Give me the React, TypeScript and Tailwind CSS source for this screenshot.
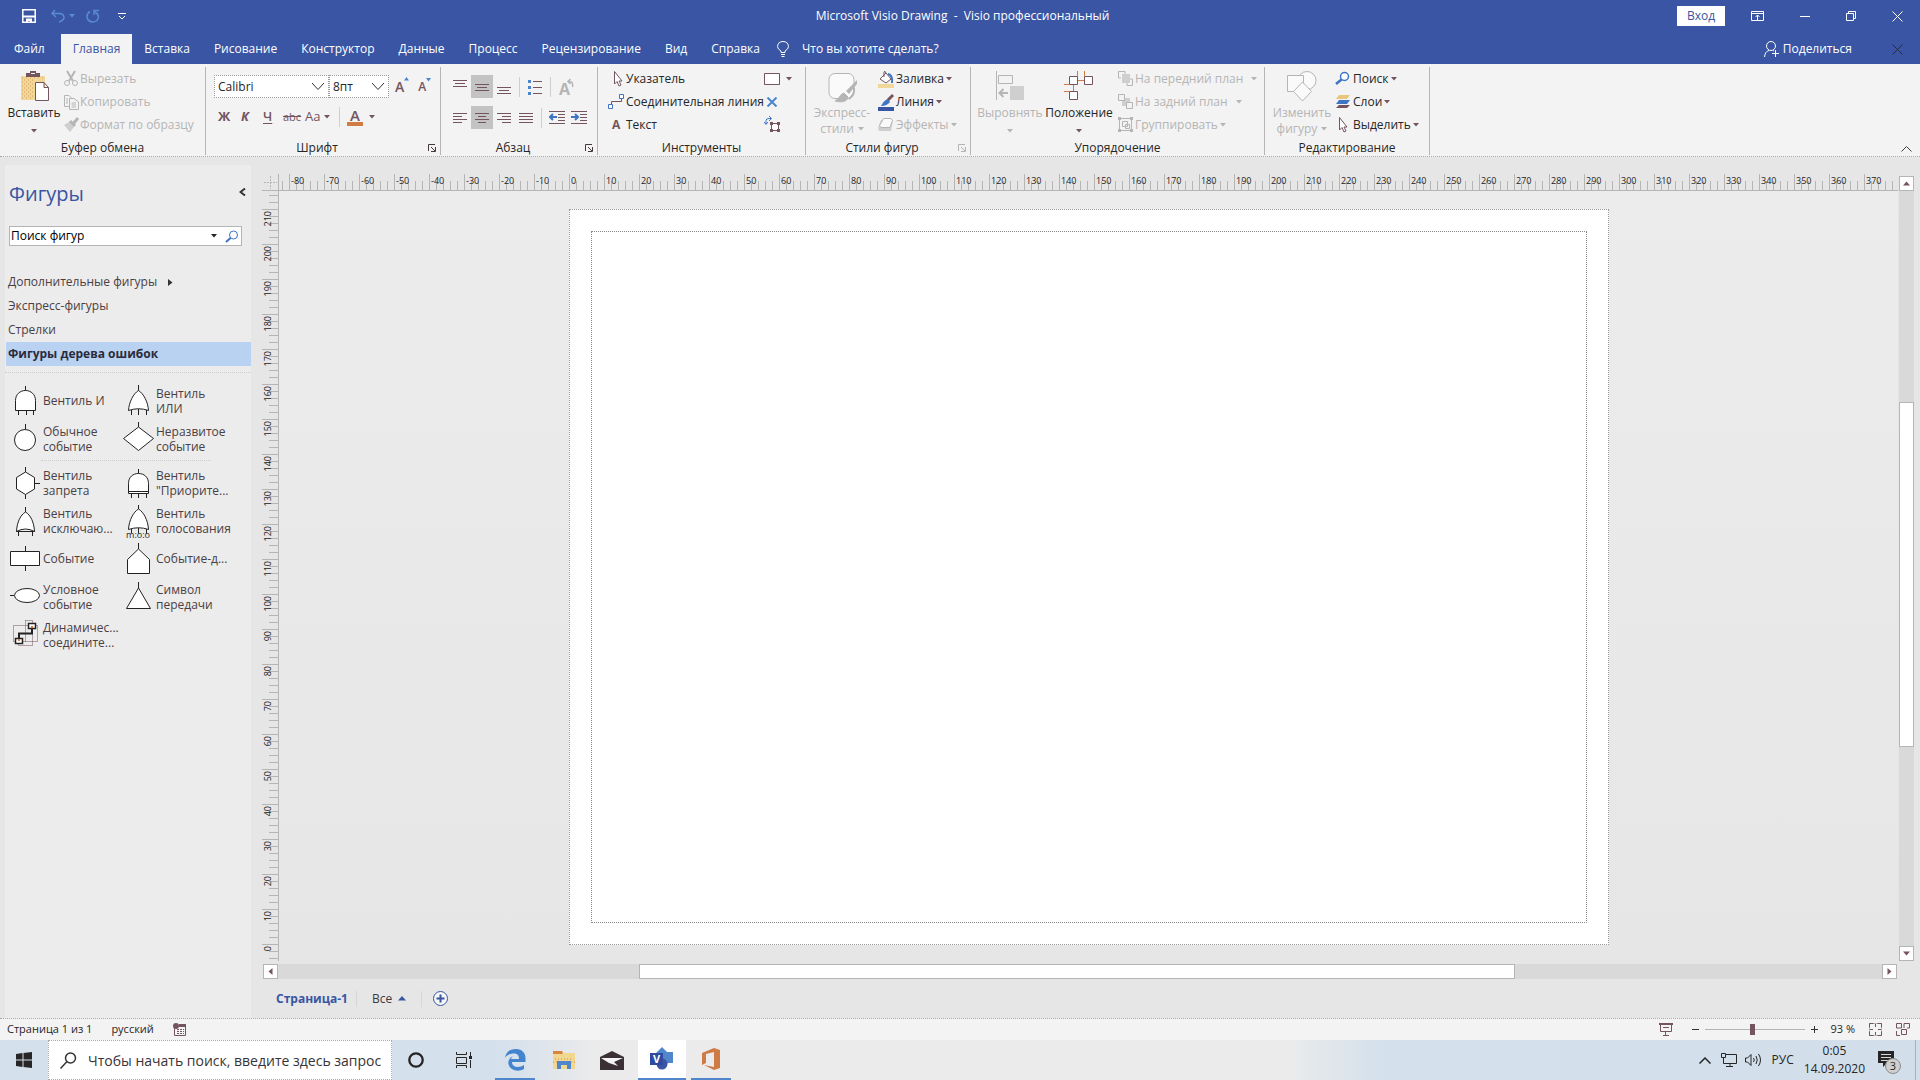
import { useState } from 'react'
import type { ReactNode } from 'react'
import clsx from 'clsx'

const TABS = ['Файл', 'Главная', 'Вставка', 'Рисование', 'Конструктор', 'Данные', 'Процесс', 'Рецензирование', 'Вид', 'Справка']
const STENCILS = ['Дополнительные фигуры', 'Экспресс-фигуры', 'Стрелки', 'Фигуры дерева ошибок']

const H_MARKS = Array.from({ length: 46 }, (_, i) => (i - 8) * 10)
const V_MARKS = Array.from({ length: 22 }, (_, i) => 210 - i * 10)

function Caret({ className = 'text-[#74555f]' }: { className?: string }) {
  return (
    <svg width="6" height="4" viewBox="0 0 6 4" className={clsx('shrink-0', className)} fill="currentColor">
      <path d="M0 0H6L3 3.5Z" />
    </svg>
  )
}

/* ---------- shape previews ---------- */

const andBody = 'M6.5 28.5V18.5C6.5 12.5 11 8.5 16.5 8.5S26.5 12.5 26.5 18.5V28.5Z'
const orBody = 'M16.5 8.5C11.5 11.5 7 20 6.5 28.5Q16.5 25 26.5 28.5C26 20 21.5 11.5 16.5 8.5Z'

const SHAPES_TOP: [string, ReactNode][] = [
  ['Вентиль И', <path d={`M16.5 4V8.5${andBody}M9.5 28.5V33M17.5 28.5V33M24.5 28.5V33`} />],
  ['Вентиль\nИЛИ', <path d={`M16.5 3V8.5${orBody}M9.5 28V33M16.5 27V33M24.5 28V33`} />],
  ['Обычное\nсобытие', <><path d="M16.5 4V9" /><circle cx="16" cy="20" r="10.5" /></>],
  ['Неразвитое\nсобытие', <path d="M16.5 2V7L31.5 18.5L16.5 30.5L1.5 18.5L16.5 7" />],
]

const SHAPES_BOTTOM: [string, ReactNode][] = [
  ['Вентиль\nзапрета', <path d="M16.5 3V8L25.5 13.5V25L16.5 30.5L7.5 25V13.5L16.5 8M16.5 30.5V35M25.5 19.5H31" />],
  ['Вентиль\n"Приорите...', <path d="M16.5 5V9.5M6.5 29.5V19.5C6.5 13 11 9.5 16.5 9.5S26.5 13 26.5 19.5V29.5ZM6.5 27.5H26.5M9.5 29.5V34M16.5 29.5V34M24.5 29.5V34" />],
  ['Вентиль\nисключаю...', <path d="M16.5 5V10C11.5 13 8 20 7.5 29.5H25.5C25 20 21.5 13 16.5 10M7.5 29.5Q16.5 24.5 25.5 29.5M9.5 29.5V34M23.5 29.5V34" />],
  ['Вентиль\nголосования', (
    <>
      <path d="M16.5 3V7C11.5 10 7 18 6.5 27.5Q16.5 24 26.5 27.5C26 18 21.5 10 16.5 7M9.5 27V31M16.5 26V31M24.5 27V31" />
      <text x="16" y="36" textAnchor="middle" fontSize="9" fill="#222" stroke="none">m:o:o</text>
    </>
  )],
  ['Событие', <path d="M16.5 6V11.5M1.5 11.5H30.5V25.5H1.5ZM16.5 25.5V31" />],
  ['Событие-д...', <path d="M16.5 3V9L27.5 19.5V33.5H5.5V19.5L16.5 9" />],
  ['Условное\nсобытие', <><path d="M1 17.5H5" /><ellipse cx="18" cy="17.5" rx="12.5" ry="7" /></>],
  ['Символ\nпередачи', <path d="M16.5 4V10L28.5 30.5H4.5L16.5 10" />],
  ['Динамичес...\nсоедините...', (
    <>
      <path d="M4.5 9.5H28.5V25.5H4.5ZM16.5 4.5H23.5V29.5H9.5V25.5M16.5 4.5V25.5" fill="none" stroke="#74555f" strokeDasharray="1 1" />
      <path d="M10 22V17.5H23V13" fill="none" strokeWidth="2" />
      <path d="M19.5 7.5H26.5V12.5H19.5ZM6.5 22.5H13.5V27.5H6.5Z" strokeWidth="1.5" />
      <path d="M22 10H24V12H22ZM9 23H11V25H9Z" fill="#d07c42" stroke="none" />
    </>
  )],
]

function ShapeGrid({ items }: { items: [string, ReactNode][] }) {
  return (
    <div className="grid grid-cols-[113px_1fr] pl-1">
      {items.map(([name, drawing]) => (
        <button key={name} className="flex h-[38px] items-center gap-px text-left">
          <svg width="33" height="38" viewBox="0 0 33 38" className="shrink-0" fill="#fff" stroke="#222">
            {drawing}
          </svg>
          <span className="pb-px text-[12px] leading-[15px] whitespace-pre text-[#4a4044]">{name}</span>
        </button>
      ))}
    </div>
  )
}

/* ---------- ribbon ---------- */

function Group({ title, className, launcher, faded, children }: {
  title: string
  className: string
  launcher?: boolean
  faded?: boolean
  children: ReactNode
}) {
  return (
    <section className={clsx('mt-[3px] flex h-[88px] shrink-0 flex-col border-r border-[#b5b5b5]', className)}>
      <div className="flex h-[73px]">{children}</div>
      <div className="flex h-[15px] items-center leading-[15px]">
        <span className="flex-1 text-center whitespace-nowrap">{title}</span>
        {launcher && (
          <button aria-label={`Параметры: ${title}`} className={clsx('mr-1', faded ? 'text-[#b5b5b5]' : 'text-[#44383c]')}>
            <svg width="8" height="8" viewBox="0 0 8 8" fill="none" stroke="currentColor">
              <path d="M.5 7V.5H7M3 3L7 7M7.5 3V7.5H3" />
            </svg>
          </button>
        )}
      </div>
    </section>
  )
}

function Row({ icon, label, off, caret, wide }: { icon: ReactNode; label: string; off?: boolean; caret?: boolean; wide?: boolean }) {
  return (
    <button className={clsx('flex h-[23px] items-center whitespace-nowrap', off ? 'text-[#b5b5b5]' : 'text-[#262626]')}>
      <svg width="18" height="18" viewBox="0 0 18 18" fill="none" stroke="currentColor" className="shrink-0">
        {icon}
      </svg>
      <span>{label}</span>
      {caret && <Caret className={clsx(wide ? 'ml-2' : 'ml-0.5', off ? 'text-[#b5b5b5]' : 'text-[#74555f]')} />}
    </button>
  )
}

function Lines({ d, on, label }: { d: string; on?: boolean; label: string }) {
  return (
    <button aria-label={label} className={clsx('flex h-[23px] w-[22px] items-center justify-center', on && 'bg-[#c3c3c3]')}>
      <svg width="14" height="16" viewBox="0 0 14 16" fill="none" stroke="#74555f">
        <path d={d} />
      </svg>
    </button>
  )
}

function Combo({ label, value, className }: { label: string; value: string; className: string }) {
  return (
    <div className="relative flex">
      <select aria-label={label} className={clsx('h-[23px] appearance-none border border-dotted border-[#999] bg-white pl-[3px] text-[12px]', className)}>
        <option>{value}</option>
      </select>
      <svg width="14" height="9" viewBox="0 0 14 9" className="pointer-events-none absolute top-[7px] right-1" fill="none" stroke="#333">
        <path d="M1 1L7 7.500L13 1" />
      </svg>
    </div>
  )
}

const pointer = <path d="M6.5 1.5V14L9 11.5L11 16L13 15L11 11H14Z" fill="#fff" stroke="#74555f" />

function Ribbon() {
  return (
    <div className="flex h-[93px] border-b border-dotted border-[#a8a8a8] bg-[#f3f3f3] text-[12px] text-[#262626]">
      <Group title="Буфер обмена" className="w-[206px]">
        <button className="flex w-[62px] flex-col items-center pl-[6px]">
          <svg width="32" height="34" viewBox="0 0 32 34" fill="none" className="mt-1">
            <path d="M3 5H27V29H3Z" fill="#f0d797" />
            <path d="M4 7H26M4 11H16M4 15H16M4 19H16M4 23H16M4 27H16" stroke="#dca05f" strokeDasharray="1 3" />
            <path d="M6 9H17M6 13H17M6 17H17M6 21H17M6 25H17" stroke="#dca05f" strokeDasharray="1 3" />
            <path d="M8 6V2H12V0H18V2H22V6Z" fill="#74555f" />
            <path d="M13 2H17V3H13Z" fill="#f3f3f3" />
            <path d="M17.5 11.5H26L30.5 16.5V29.5H17.5ZM26 11.5V16.5H30.5" fill="#fff" stroke="#74555f" />
          </svg>
          <span className="leading-4">Вставить</span>
          <Caret className="mt-2 text-[#74555f]" />
        </button>
        <div className="flex flex-col">
          <Row off label="Вырезать" icon={<><path d="M5 1L11 11M13 1L7 11" strokeWidth="2" /><circle cx="5" cy="13" r="2.5" /><circle cx="13" cy="13" r="2.5" /></>} />
          <Row off label="Копировать" icon={<path d="M7 13.5H2.5V2.5H7L9.500 5V6M7.500 5.500H12L16.500 9V16.500H7.500ZM4 6H6M4 8H6M4 10H6M9.500 10H14M9.500 12H14M9.500 14H14" />} />
          <Row off label="Формат по образцу" icon={<><path d="M2 9L7 6L12 11L8 16Z" fill="#cfcfcf" stroke="none" /><path d="M8 5L13 10M11 8L16 2" strokeWidth="3" /></>} />
        </div>
      </Group>

      <Group title="Шрифт" className="w-[235px]" launcher>
        <div className="flex flex-col gap-2 pt-2 pl-2">
          <div className="flex items-center">
            <Combo label="Шрифт" value="Calibri" className="w-[115px]" />
            <Combo label="Размер" value="8пт" className="w-[60px]" />
            <button className="ml-[6px] flex text-[14px] leading-5 font-semibold text-[#74555f]">
              A<span className="-mt-1"><svg width="5" height="12" viewBox="0 0 5 12"><path d="M0 7.500L2.500 4L5 7.500Z" fill="#4a86cf" /></svg></span>
            </button>
            <button className="ml-[9px] flex text-[12px] leading-5 font-semibold text-[#74555f]">
              A<span className="-mt-1"><svg width="5" height="12" viewBox="0 0 5 12"><path d="M0 5L2.500 8.500L5 5Z" fill="#4a86cf" /></svg></span>
            </button>
          </div>
          <div className="flex h-[22px] items-center pl-1 text-[13px] text-[#74555f]">
            <button className="w-[23px] text-left font-bold">Ж</button>
            <button className="w-[22px] text-left font-bold italic">К</button>
            <button className="w-5 text-left font-semibold underline underline-offset-2">Ч</button>
            <button className="w-[22px] text-left text-[11px] line-through">abc</button>
            <button className="flex w-[34px] items-center gap-1">Aa<Caret /></button>
            <span className="h-5 w-px bg-[#cfcfcf]" />
            <button aria-label="Цвет текста" className="ml-[7px] flex items-center gap-[6px]">
              <span className="flex w-4 justify-center border-b-4 border-[#d07c42] text-[15px] leading-[14px] font-semibold">A</span>
              <Caret />
            </button>
          </div>
        </div>
      </Group>

      <Group title="Абзац" className="w-[157px]" launcher>
        <div className="flex flex-col gap-2 pt-2 pl-2">
          <div className="flex items-center">
            <Lines label="По верхнему краю" d="M0 1.500H14M2 4.500H12M0 7.500H14" />
            <Lines label="По середине" on d="M0 5.500H14M2 8.500H12M0 11.500H14" />
            <Lines label="По нижнему краю" d="M0 8.500H14M2 11.500H12M0 14.500H14" />
            <span className="mx-1 h-5 w-px bg-[#cfcfcf]" />
            <button aria-label="Маркеры" className="flex w-[22px] justify-center">
              <svg width="14" height="16" viewBox="0 0 14 16" stroke="#74555f">
                <path d="M5 2.500H14M5 8.500H14M5 14.500H14" />
                <path d="M0 2.500H3M0 8.500H3M0 14.500H3" stroke="#4a86cf" strokeWidth="3" />
              </svg>
            </button>
            <span className="mx-1 h-5 w-px bg-[#cfcfcf]" />
            <button aria-label="Повернуть текст" className="ml-1">
              <svg width="16" height="18" viewBox="0 0 16 18" fill="none" stroke="#b5b5b5">
                <text x="0" y="17" fontSize="16" fontWeight="bold" fill="#b5b5b5" stroke="none">A</text>
                <path d="M9 3.500H11Q14.500 4 13.500 9M11.500 1L9 3.500L11.500 6" strokeWidth="1.500" />
              </svg>
            </button>
          </div>
          <div className="flex items-center">
            <Lines label="По левому краю" d="M0 3.500H14M0 6.500H9M0 9.500H14M0 12.500H9" />
            <Lines label="По центру" on d="M0 3.500H14M3 6.500H11M0 9.500H14M3 12.500H11" />
            <Lines label="По правому краю" d="M0 3.500H14M5 6.500H14M0 9.500H14M5 12.500H14" />
            <Lines label="По ширине" d="M0 3.500H14M0 6.500H14M0 9.500H14M0 12.500H14" />
            <span className="mx-1 h-5 w-px bg-[#cfcfcf]" />
            {['M8 7H1M4 4L1 7L4 10', 'M0 7H7M4 4L7 7L4 10'].map((d, i) => (
              <button key={d} aria-label={i ? 'Увеличить отступ' : 'Уменьшить отступ'} className="flex w-[22px] justify-center">
                <svg width="16" height="15" viewBox="0 0 16 15" fill="none" stroke="#74555f">
                  <path d="M0 1.500H16M9 4.500H16M9 7.500H16M9 10.500H16M0 13.500H16" />
                  <path d={d} stroke="#3d74c4" strokeWidth="2" />
                </svg>
              </button>
            ))}
          </div>
        </div>
      </Group>

      <Group title="Инструменты" className="w-[208px]">
        <div className="flex flex-1 flex-col pl-[10px]">
          <Row label="Указатель" icon={pointer} />
          <Row label="Соединительная линия" icon={<><path d="M3.500 12V8.500H13.500V6" stroke="#74555f" /><path d="M.5 11.500H4.500V15.500H.5ZM11.500 1.500H15.500V5.500H11.500Z" fill="#fff" stroke="#3d74c4" /></>} />
          <Row label="Текст" icon={<text x="4" y="13" fontSize="12" fontWeight="bold" fill="#74555f" stroke="none">A</text>} />
        </div>
        <div className="flex w-[41px] flex-col">
          <button aria-label="Прямоугольник" className="flex h-[23px] items-center gap-[6px]">
            <svg width="16" height="12" viewBox="0 0 16 12" fill="#fff" stroke="#74555f"><path d="M.5.5H15.500V11.500H.5Z" /></svg>
            <Caret />
          </button>
          <button aria-label="Точка соединения" className="flex h-[23px] w-4 items-center justify-center">
            <svg width="12" height="10" viewBox="0 0 12 10" stroke="#4a86cf" strokeWidth="2"><path d="M1.500 .5L10.500 9.500M10.500 .5L1.500 9.500" /></svg>
          </button>
          <button aria-label="Блок текста" className="flex h-[23px] items-center">
            <svg width="17" height="17" viewBox="0 0 17 17" fill="none" stroke="#74555f">
              <path d="M7.500 7.500H14.500V14.500H7.500Z" fill="#fff" />
              <path d="M6 6H9V9H6ZM13 6H16V9H13ZM6 13H9V16H6ZM13 13H16V16H13Z" fill="#74555f" stroke="none" />
              <path d="M2 8V4.500Q2 2.500 5 2.500H7M5 0L7.500 2.500L5 5M0 6L2 8.500L4 6" stroke="#3d74c4" />
            </svg>
          </button>
        </div>
      </Group>

      <Group title="Стили фигур" className="w-[165px]" launcher faded>
        <button className="flex w-[72px] flex-col items-center text-[#b5b5b5]">
          <svg width="32" height="34" viewBox="0 0 32 34" fill="none" stroke="currentColor" className="mt-1">
            <rect x="3" y="2.500" width="25" height="25" rx="6" fill="#fafafa" />
            <path d="M31 9L20 20L23 23L31 13Z" fill="currentColor" stroke="none" />
            <path d="M18 22C14 23 14 27 9 30C16 32 22 30 22 26Z" fill="currentColor" />
            <path d="M28 17Q29 23 23 28" strokeWidth="2" />
          </svg>
          <span className="leading-4">Экспресс-</span>
          <span className="flex items-center gap-1 leading-4">стили<Caret className="text-[#b5b5b5]" /></span>
        </button>
        <div className="flex flex-col">
          <Row label="Заливка" caret icon={<><path d="M0 14H16V18H0Z" fill="#f0d797" stroke="none" /><path d="M2 9L8 3L13 9L8 13ZM6 7V2Q7 0 8 3" fill="#fff" stroke="#74555f" /><path d="M10 4Q15 5 14 13" stroke="#3d74c4" strokeWidth="2" /></>} />
          <Row label="Линия" caret icon={<><path d="M0 14H16V18H0Z" fill="#3955a3" stroke="none" /><path d="M3 13Q6 7 10 6L12 9Q9 13 3 13Z" fill="#3d74c4" stroke="none" /><path d="M10 7L15 2" stroke="#74555f" strokeWidth="3" /></>} />
          <Row label="Эффекты" caret off icon={<><path d="M3 4H15L13 15H1L0 12Z" fill="#cfcfcf" stroke="none" /><path d="M5.500 2.500H13L14.500 4.500L12 11.500H3L1.500 9.500Z" fill="#fafafa" /></>} />
        </div>
      </Group>

      <Group title="Упорядочение" className="w-[294px]">
        <button className="flex w-[78px] flex-col items-center text-[#b5b5b5]">
          <svg width="28" height="34" viewBox="0 0 28 34" fill="none" stroke="currentColor" className="mt-1">
            <path d="M.5 0V29M2.500 4.500H16.500V12.500H2.500Z" />
            <path d="M14 15H28V29H14Z" fill="#cfcfcf" stroke="none" />
            <path d="M12 22H4M7.500 18L3.500 22L7.500 26" strokeWidth="2" />
          </svg>
          <span className="leading-4">Выровнять</span>
          <Caret className="mt-2 text-[#b5b5b5]" />
        </button>
        <button className="flex w-[60px] flex-col items-center whitespace-nowrap">
          <svg width="30" height="34" viewBox="0 0 30 34" fill="none" stroke="#74555f" className="mt-1">
            <path d="M13.500 0V5M20.500 0V5M13 9.500H20M0 13.500H5M0 20.500H5M9.500 14V20" stroke="#d07c42" />
            <path d="M5.500 5.500H13.500V13.500H5.500ZM20.500 5.500H28.500V13.500H20.500ZM5.500 20.500H13.500V28.500H5.500Z" fill="#fff" />
          </svg>
          <span className="leading-4">Положение</span>
          <Caret className="mt-2 text-[#74555f]" />
        </button>
        <div className="ml-2 flex flex-col">
          <Row off wide caret label="На передний план" icon={<><path d="M5 4H13V13H5Z" fill="#cfcfcf" stroke="none" /><path d="M1.500 8V1.500H8M1.500 8H4M8 1.500V4M10 15.500H15.500V9M10 15.500V13M15.500 9H13" /></>} />
          <Row off wide caret label="На задний план" icon={<><path d="M5 5H13V13H5Z" fill="#cfcfcf" stroke="none" /><path d="M1.500 1.500H7.500V7.500H1.500ZM9.500 9.500H15.500V15.500H9.500Z" fill="#f3f3f3" /></>} />
          <Row off caret label="Группировать" icon={<><path d="M2.500 2.500H14.500V14.500H2.500ZM5.500 5.500H10.500V10.500H5.500ZM8.500 8.500H12.500V12.500H8.500Z" /><path d="M1 1H4V4H1ZM13 1H16V4H13ZM1 13H4V16H1ZM13 13H16V16H13Z" fill="currentColor" stroke="none" /></>} />
        </div>
      </Group>

      <Group title="Редактирование" className="w-[165px]">
        <button className="flex w-[70px] flex-col items-center pl-1 text-[#b5b5b5]">
          <svg width="30" height="34" viewBox="0 0 30 34" fill="#fafafa" stroke="currentColor" className="mt-1">
            <circle cx="20" cy="9.500" r="9" />
            <path d="M.5 4.500H16.500V20.500H.5Z" />
            <path d="M15.500 11L24.500 20.500L15.500 30L6.500 20.500Z" />
          </svg>
          <span className="leading-4">Изменить</span>
          <span className="flex items-center gap-1 leading-4">фигуру<Caret className="text-[#b5b5b5]" /></span>
        </button>
        <div className="flex flex-col">
          <Row label="Поиск" caret icon={<><circle cx="9.500" cy="6.500" r="4" stroke="#3d74c4" fill="#fff" strokeWidth="1.500" /><path d="M6.500 9.500L1 14" stroke="#3d74c4" strokeWidth="2.500" /></>} />
          <Row label="Слои" caret icon={<><path d="M4 2H15L12 6H1Z" fill="#e8c77d" stroke="none" /><path d="M4 7H15L12 11H1Z" fill="#3d74c4" stroke="none" /><path d="M4 12H15L12 15H1Z" fill="#74555f" stroke="none" /></>} />
          <Row label="Выделить" caret icon={<path d="M4.500 1.500V14L7 11.500L9 16L11 15L9 11H12Z" fill="#fff" stroke="#74555f" />} />
        </div>
      </Group>

      <div className="flex flex-1 items-end justify-end pr-2 pb-1">
        <button aria-label="Свернуть ленту">
          <svg width="11" height="6" viewBox="0 0 11 6" fill="none" stroke="#44383c"><path d="M.5 5.500L5.500.5L10.500 5.500" /></svg>
        </button>
      </div>
    </div>
  )
}

/* ---------- drawing area ---------- */

function HorizontalRuler() {
  return (
    <div className="flex h-[17px] min-w-0 flex-1 overflow-hidden border-b border-[#b5b5b5] pl-[3px]">
      <div className="flex w-[7px] shrink-0 items-end">
        <i className="h-[9px] w-px bg-[#b5b5b5]" />
      </div>
      {H_MARKS.map((n) => (
        <div key={n} className="relative flex w-[35px] shrink-0 items-end justify-between border-l border-[#b5b5b5] px-[6px]">
          {[0, 1, 2, 3].map((i) => <i key={i} className="h-[9px] w-px bg-[#b5b5b5]" />)}
          <span className="absolute top-px left-px text-[9px] leading-3 text-[#222]">{n}</span>
        </div>
      ))}
    </div>
  )
}

function VerticalRuler() {
  return (
    <div className="flex w-[17px] shrink-0 flex-col overflow-hidden border-r border-[#b5b5b5] pt-1">
      <div className="flex h-[14px] shrink-0 flex-col items-end gap-[6px]">
        <i className="h-px w-[9px] bg-[#b5b5b5]" />
        <i className="h-px w-[9px] bg-[#b5b5b5]" />
      </div>
      {V_MARKS.map((n) => (
        <div key={n} className="relative flex h-[35px] shrink-0 flex-col items-end justify-between border-t border-[#b5b5b5] py-[6px]">
          {[0, 1, 2, 3].map((i) => <i key={i} className="h-px w-[9px] bg-[#b5b5b5]" />)}
          <span className="absolute top-px left-0 rotate-180 text-[9px] leading-3 text-[#222] [writing-mode:vertical-rl]">{n}</span>
        </div>
      ))}
    </div>
  )
}

function ScrollButton({ d, label }: { d: string; label: string }) {
  return (
    <button aria-label={label} className="flex size-[15px] shrink-0 items-center justify-center border border-[#b5b5b5] bg-white">
      <svg width="7" height="7" viewBox="0 0 7 7" fill="#74555f"><path d={d} /></svg>
    </button>
  )
}

function Workspace() {
  return (
    <main className="flex min-w-0 flex-1 flex-col pt-[17px] pr-[5px] pl-[11px]">
      <div className="flex min-h-0 flex-1">
        <div className="flex min-w-0 flex-1 flex-col">
          <div className="flex">
            <svg width="17" height="17" viewBox="0 0 17 17" className="shrink-0" fill="none" stroke="#b5b5b5">
              <path d="M16.500 0V17M0 16.500H17" />
              <path d="M8.500 2V15M2 8.500H15" strokeDasharray="2 1" />
            </svg>
            <HorizontalRuler />
          </div>
          <div className="flex min-h-0 flex-1">
            <VerticalRuler />
            <div className="min-w-0 flex-1 overflow-hidden bg-linear-to-b from-[#ececec] to-[#e6e6e6] pt-[18px] pl-[290px]">
              <div className="w-[1040px] border border-dotted border-[#999] bg-white p-[21px]">
                <div className="h-[692px] border border-dotted border-[#888]" />
              </div>
            </div>
          </div>
        </div>
        <div className="mt-0.5 mr-px ml-px flex w-[15px] flex-col">
          <ScrollButton label="Вверх" d="M0 5.500L3.500 1.500L7 5.500Z" />
          <div className="flex flex-1 flex-col bg-[#d9d9d9]">
            <div className="flex-[212]" />
            <div className="flex-[343] border border-[#b5b5b5] bg-white" />
            <div className="flex-[200]" />
          </div>
          <ScrollButton label="Вниз" d="M0 1.500L3.500 5.500L7 1.500Z" />
        </div>
      </div>
      <div className="mt-[3px] mr-[18px] ml-px flex">
        <ScrollButton label="Влево" d="M5.500 0L1.500 3.500L5.500 7Z" />
        <div className="flex flex-1 bg-[#d9d9d9]">
          <div className="flex-[361]" />
          <div className="flex-[874] border border-[#b5b5b5] bg-white" />
          <div className="flex-[367]" />
        </div>
        <ScrollButton label="Вправо" d="M1.500 0L5.500 3.500L1.500 7Z" />
      </div>
      <div className="flex h-[39px] items-center pl-[14px] text-[12px]">
        <button className="font-bold text-[#3955a3]">Страница-1</button>
        <span className="mr-[15px] ml-2 h-4 w-px bg-[#d6d6d6]" />
        <button className="flex items-center gap-[6px] text-[#44383c]">
          Все
          <svg width="8" height="5" viewBox="0 0 8 5" fill="#3955a3"><path d="M0 4.500L4 0L8 4.500Z" /></svg>
        </button>
        <span className="mr-[11px] ml-[15px] h-4 w-px bg-[#d6d6d6]" />
        <button aria-label="Добавить страницу">
          <svg width="15" height="15" viewBox="0 0 15 15" fill="none" stroke="#3955a3">
            <circle cx="7.500" cy="7.500" r="7" fill="#f6f6f6" />
            <path d="M3.500 7.500H11.500M7.500 3.500V11.500" strokeWidth="2" />
          </svg>
        </button>
      </div>
    </main>
  )
}

function ShapesPanel() {
  const [query, setQuery] = useState('Поиск фигур')
  return (
    <aside className="mt-2 ml-[5px] flex w-[246px] shrink-0 flex-col bg-[#ececec]">
      <div className="flex h-[61px] items-center justify-between pr-[5px] pb-1 pl-1">
        <h2 className="text-[20px] leading-6 text-[#3955a3]">Фигуры</h2>
        <button aria-label="Свернуть" className="pb-1">
          <svg width="7" height="8" viewBox="0 0 7 8" fill="none" stroke="#333" strokeWidth="2"><path d="M6 .5L1.500 4L6 7.500" /></svg>
        </button>
      </div>
      <div className="mr-[9px] ml-1 flex h-5 items-center border border-[#b5b5b5] bg-white">
        <input
          aria-label="Поиск фигур"
          value={query}
          onChange={(e) => setQuery(e.target.value)}
          className="min-w-0 flex-1 pl-px text-[12px] text-black outline-none"
        />
        <Caret className="text-[#222]" />
        <button aria-label="Найти" className="mr-[3px] ml-2">
          <svg width="13" height="13" viewBox="0 0 13 13" fill="none" stroke="#3d74c4"><circle cx="8.500" cy="5" r="4" /><path d="M5.500 8L1 12" strokeWidth="2" /></svg>
        </button>
      </div>
      <nav className="mt-6 ml-px flex flex-col text-[12px] text-[#4a4044]">
        {STENCILS.map((name, i) => (
          <button key={name} className={clsx('flex h-6 items-center pl-0.5', i === 3 && 'bg-[#b9d2f1] font-bold text-[#2b2b3c]')}>
            {name}
            {i === 0 && <svg width="5" height="7" viewBox="0 0 5 7" className="ml-[11px]" fill="#333"><path d="M0 0L4.500 3.500L0 7Z" /></svg>}
          </button>
        ))}
      </nav>
      <div className="mt-[6px] mb-[9px] border-t border-dotted border-[#ccc]" />
      <ShapeGrid items={SHAPES_TOP} />
      <div className="mr-10 mt-0.5 mb-[3px] ml-9 border-t border-dotted border-[#ccc]" />
      <ShapeGrid items={SHAPES_BOTTOM} />
    </aside>
  )
}

/* ---------- status bar and taskbar ---------- */

function StatusBar() {
  const [zoom, setZoom] = useState(47)
  return (
    <footer className="flex h-[22px] items-center border-t border-dotted border-[#a8a8a8] bg-[#f3f3f3] pr-[10px] pl-[7px] text-[11px] text-[#262626]">
      <span>Страница 1 из 1</span>
      <span className="ml-[19px]">русский</span>
      <svg width="14" height="13" viewBox="0 0 14 13" className="ml-[19px]" fill="none" stroke="#74555f">
        <path d="M1.500 5V12.500H12.500V2" />
        <path d="M6 2.500H13M4 6.500H11M4 8.500H11M4 10.500H11" strokeDasharray="2 1" />
        <path d="M6 1H13V4H6Z" fill="#74555f" stroke="none" />
        <circle cx="3" cy="3" r="3" fill="#74555f" stroke="none" />
      </svg>
      <div className="flex-1" />
      <button aria-label="Режим презентации">
        <svg width="14" height="13" viewBox="0 0 14 13" fill="none" stroke="#74555f"><path d="M0 1H14" strokeWidth="2" /><path d="M1.500 1V8.500H12.500V1M4 4.500H10M6.500 9V12M4 12.500H10" /></svg>
      </button>
      <button aria-label="Уменьшить" className="ml-[19px] h-px w-[7px] bg-[#333]" />
      <input
        type="range"
        aria-label="Масштаб"
        value={zoom}
        onChange={(e) => setZoom(Number(e.target.value))}
        className="mx-[6px] h-[11px] w-[100px] appearance-none bg-transparent bg-[linear-gradient(#b5b5b5,#b5b5b5)] bg-[length:100%_1px] bg-center bg-no-repeat [&::-webkit-slider-thumb]:h-[11px] [&::-webkit-slider-thumb]:w-[5px] [&::-webkit-slider-thumb]:appearance-none [&::-webkit-slider-thumb]:bg-[#74555f]"
      />
      <button aria-label="Увеличить">
        <svg width="7" height="7" viewBox="0 0 7 7" stroke="#333"><path d="M0 3.500H7M3.500 0V7" /></svg>
      </button>
      <span className="ml-3">93 %</span>
      <button aria-label="Вписать страницу" className="ml-[14px]">
        <svg width="13" height="13" viewBox="0 0 13 13" fill="none" stroke="#74555f">
          <rect x=".5" y=".5" width="12" height="12" stroke="#b5b5b5" />
          <path d="M4.500.5H.5V4.500M8.500.5H12.500V4.500M.5 8.500V12.500H4.500M12.500 8.500V12.500H8.500M6.500 1V4M6.500 9V12M1 6.500H4M9 6.500H12" />
        </svg>
      </button>
      <button aria-label="Переключить окна" className="ml-[14px]">
        <svg width="14" height="13" viewBox="0 0 14 13" fill="none" stroke="#74555f"><path d="M.5 5V.5H5.500V5ZM8 5V.5H13.500V5H11M.5 8V12.500H4M5.500 6.500H10.500V11.500H5.500Z" /></svg>
      </button>
    </footer>
  )
}

function Taskbar() {
  return (
    <div className="flex h-10 items-stretch bg-[linear-gradient(90deg,#d4e0ec_0%,#d4e0ec_26%,#ebebeb_31%,#ebebeb_67%,#d4e0ec_72%,#d2deea_100%)] text-[#262626]">
      <button aria-label="Пуск" className="flex w-12 items-center justify-center">
        <svg width="16" height="16" viewBox="0 0 16 16" fill="#262626"><path d="M0 2L6.500 1V7.500H0ZM7.500 1L16 0V7.500H7.500ZM0 8.500H6.500V15L0 14ZM7.500 8.500H16V16L7.500 15Z" /></svg>
      </button>
      <label className="flex w-[344px] items-center border border-dotted border-[#a8a8a8] bg-white pl-[11px]">
        <svg width="17" height="17" viewBox="0 0 17 17" className="mr-[11px] shrink-0" fill="none" stroke="#333" strokeWidth="1.500"><circle cx="10.500" cy="6" r="5" /><path d="M7 9.500L.5 16.500" /></svg>
        <input aria-label="Поиск" placeholder="Чтобы начать поиск, введите здесь запрос" className="min-w-0 flex-1 text-[14px] outline-none placeholder:text-[#3a3336]" />
      </label>
      <button aria-label="Кортана" className="flex w-12 items-center justify-center">
        <svg width="16" height="16" viewBox="0 0 16 16" fill="none" stroke="#262226" strokeWidth="2.300"><circle cx="8" cy="8" r="6.700" /></svg>
      </button>
      <button aria-label="Представление задач" className="flex w-12 items-center justify-center">
        <svg width="16" height="16" viewBox="0 0 16 16" fill="none" stroke="#262626"><path d="M.5 0V2.500H10.500V0M.5 5.500H10.500V11.500H.5ZM.5 16V13.500H10.500V16M14.500 0V4M14.500 8V16" /><path d="M13 4H16V7H13Z" fill="#262626" stroke="none" /></svg>
      </button>
      <button aria-label="Edge" className="mx-[7px] flex w-10 items-center justify-center border-b-2 border-[#4f86cc] pt-0.5">
        <svg width="21" height="22" viewBox="0 0 21 22" fill="#4384cf"><path d="M0 9C1 3 5 0 11 0C17 0 20.500 4 20.500 9V13H7C7 19 15 19 19 16V20C15 22 11 22.500 7 20C2 17 2 10 8 7C6 9 6 10 6 10H14C14 6 12 4.500 9 4.500C5 4.500 2 6 0 9Z" /></svg>
      </button>
      <button aria-label="Проводник" className="flex w-11 items-center justify-center">
        <svg width="22" height="18" viewBox="0 0 22 18"><path d="M0 0H9L10 2H22V18H0Z" fill="#f0d890" /><path d="M0 0H9L10 2L9 3H0Z" fill="#d8863f" /><path d="M2 8H20M0 11H22" stroke="#d8863f" strokeDasharray="1 2" /><path d="M4 18V10H18V18H14V14H8V18Z" fill="#4f86cc" /></svg>
      </button>
      <button aria-label="Почта" className="flex w-[52px] items-center justify-center">
        <svg width="24" height="19" viewBox="0 0 24 19" fill="#3b3035"><path d="M0 6L12 0L24 6V19H0Z" /><path d="M1 7L23 7L14 11L18 15L9 12Z" fill="#f4f4f4" /></svg>
      </button>
      <button aria-label="Visio" className="flex w-12 items-center justify-center border-b-2 border-[#4f86cc] bg-white">
        <svg width="24" height="24" viewBox="0 0 24 24"><path d="M12 0L17 5H23V16H18L12 22L6 16V6Z" fill="#4f86cc" /><circle cx="12" cy="17" r="5.500" fill="#3955a3" /><path d="M0 6H13V18H0Z" fill="#2f4ba0" /><text x="6.500" y="16" textAnchor="middle" fontSize="11" fontWeight="bold" fill="#fff">V</text></svg>
      </button>
      <button aria-label="Office" className="ml-[5px] flex w-10 items-center justify-center border-b-2 border-[#4f86cc]">
        <svg width="19" height="22" viewBox="0 0 19 22" fill="#cf7b45"><path d="M0 5L12 0L18 2V20L12 22L2 17L12 19V4L4 6V15L0 17Z" /></svg>
      </button>
      <div className="flex-1" />
      <div className="flex items-center text-[12px]">
        <svg width="12" height="7" viewBox="0 0 12 7" fill="none" stroke="#262626" strokeWidth="1.500" className="mr-[10px]"><path d="M.5 6.500L6 1L11.500 6.500" /></svg>
        <svg width="16" height="14" viewBox="0 0 16 14" fill="none" stroke="#262626" className="mr-2"><path d="M5 1.500H15.500V10.500H2.500V5M9 10.500V13M5 13.500H12M.5.5H4.500V4.500H.5Z" /></svg>
        <svg width="17" height="14" viewBox="0 0 17 14" fill="none" stroke="#262626" className="mr-[10px]"><path d="M.5 5H2.500L6 1.500V12.500L2.500 9H.5ZM8.500 5Q10 7 8.500 9M11 3Q13.500 7 11 11M13.500 1Q17.500 7 13.500 13" /></svg>
        <span className="mr-[10px]">РУС</span>
        <div className="flex flex-col items-center leading-[18px]">
          <span>0:05</span>
          <span>14.09.2020</span>
        </div>
        <button aria-label="Уведомления" className="relative mr-5 ml-[13px] h-6">
          <svg width="17" height="18" viewBox="0 0 17 18" fill="#262626"><path d="M0 0H16V12H9L5 16V12H0Z" /><path d="M3 3.500H13M3 6.500H13M3 9.500H11" stroke="#d8d8d8" /></svg>
          <span className="absolute top-[10px] left-[7px] flex size-4 items-center justify-center rounded-full border border-[#8a8a8a] bg-[#cfcfcf] text-[11px]">3</span>
        </button>
        <span className="mr-1 h-10 w-px bg-[#a8b2bc]" />
      </div>
    </div>
  )
}

export default function App() {
  const [tab, setTab] = useState('Главная')

  return (
    <div className="flex h-screen flex-col overflow-hidden bg-[#e6e6e6] font-['Open_Sans','Noto_Sans',sans-serif]">
      <header className="bg-[#3955a3] text-[12px] text-white">
        <div className="flex h-[34px] items-center pb-0.5">
          <div className="flex flex-1 items-center pl-[22px]">
            <button aria-label="Сохранить">
              <svg width="14" height="14" viewBox="0 0 14 14" fill="none" stroke="#fff" strokeWidth="1.500"><path d="M.8.8H13.200V13.200H.8Z" /><path d="M1 7.500H13" strokeWidth="2" /><path d="M4 9.500H10V14H8V12H6V14H4Z" fill="#fff" stroke="none" /></svg>
            </button>
            <button aria-label="Отменить" className="ml-[15px] flex items-center gap-1 text-[#5b8bd0]">
              <svg width="14" height="14" viewBox="0 0 14 14" fill="none" stroke="currentColor" strokeWidth="1.500"><path d="M4 1L1 4.500L5 8M1 4.500H9Q13 5 13 9Q12 12 8 13" /></svg>
              <Caret className="text-[#5b8bd0]" />
            </button>
            <button aria-label="Повторить" className="ml-[11px] text-[#5b8bd0]">
              <svg width="14" height="14" viewBox="0 0 14 14" fill="none" stroke="currentColor" strokeWidth="1.500"><path d="M4 2.500Q1 4 1 8Q2 13 7 13Q12 12.500 12.500 8Q12.500 5 9 3M8 6V1.500H13" /></svg>
            </button>
            <button aria-label="Настройка панели" className="ml-[18px]">
              <svg width="8" height="7" viewBox="0 0 8 7" fill="none" stroke="#fff"><path d="M0 .5H8M1 3L4 6L7 3" /></svg>
            </button>
          </div>
          <h1 className="whitespace-pre">Microsoft Visio Drawing  -  Visio профессиональный</h1>
          <div className="flex flex-1 items-center justify-end pr-[17px]">
            <button className="mr-[26px] h-5 w-12 bg-white text-[#3955a3]">Вход</button>
            <button aria-label="Параметры ленты" className="mr-9">
              <svg width="13" height="10" viewBox="0 0 13 10" fill="none" stroke="#fff"><path d="M.5.5H12.500V9.500H.5ZM0 2.500H13M6.500 9V4M4.500 6L6.500 4L8.500 6" /></svg>
            </button>
            <button aria-label="Свернуть окно" className="mr-9 h-px w-[10px] bg-white" />
            <button aria-label="Восстановить" className="mr-9">
              <svg width="10" height="10" viewBox="0 0 10 10" fill="none" stroke="#fff"><path d="M.5 2.500H7.500V9.500H.5ZM2.500 2V.5H9.500V7.500H8" /></svg>
            </button>
            <button aria-label="Закрыть">
              <svg width="11" height="11" viewBox="0 0 11 11" stroke="#fff"><path d="M.5.5L10.500 10.500M10.500.5L.5 10.500" /></svg>
            </button>
          </div>
        </div>
        <nav className="flex h-[30px] items-stretch pl-0.5">
          {TABS.map((name) => (
            <button
              key={name}
              onClick={() => setTab(name)}
              className={clsx('px-3', name === 'Файл' && 'mr-1', tab === name && 'bg-[#f3f3f3] text-[#3955a3]')}
            >
              {name}
            </button>
          ))}
          <button className="ml-[5px] flex items-center gap-[13px]">
            <svg width="12" height="16" viewBox="0 0 12 16" fill="none" stroke="#fff"><path d="M4 11.500V10Q.5 8 .5 5.500Q1 .5 6 .5Q11 .5 11.500 5.500Q11.500 8 8 10V11.500ZM4 13.500H8M4.500 15.500H7.500" /></svg>
            Что вы хотите сделать?
          </button>
          <div className="flex flex-1 items-center justify-end pr-[17px]">
            <button className="mr-10 flex items-center gap-1">
              <svg width="15" height="16" viewBox="0 0 15 16" fill="none" stroke="#fff"><circle cx="7" cy="5" r="4.500" /><path d="M.5 16Q1 10.500 5 9.500M9 9.500L10 10M8 12.500H15M11.500 9V16" /></svg>
              Поделиться
            </button>
            <button aria-label="Закрыть документ">
              <svg width="11" height="11" viewBox="0 0 11 11" stroke="#262a44"><path d="M.5.5L10.500 10.500M10.500.5L.5 10.500" /></svg>
            </button>
          </div>
        </nav>
      </header>
      <Ribbon />
      <div className="flex min-h-0 flex-1">
        <ShapesPanel />
        <Workspace />
      </div>
      <StatusBar />
      <Taskbar />
    </div>
  )
}
